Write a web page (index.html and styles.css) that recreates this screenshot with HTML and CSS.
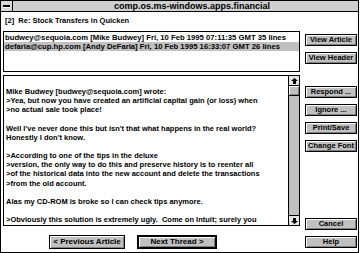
FILE: index.html
```html
<!DOCTYPE html>
<html lang="en">
<head>
  <meta charset="UTF-8">
  <title>comp.os.ms-windows.apps.financial</title>
  <link rel="stylesheet" href="styles.css">
</head>
<body>
  <div class="window">
    <div class="titlebar">
      <div class="sysmenu"><span class="dash"></span></div>
      <div class="title">comp.os.ms-windows.apps.financial</div>
    </div>
    <div class="body">
      <div class="subject">[2]&nbsp; Re: Stock Transfers in Quicken</div>
      <div class="listbox">
        <div class="item">budwey@sequoia.com [Mike Budwey] Fri, 10 Feb 1995 07:11:35 GMT 35 lines</div>
        <div class="item selected">defaria@cup.hp.com [Andy DeFaria] Fri, 10 Feb 1995 16:33:07 GMT 26 lines</div>
      </div>
      <div class="side side-top">
        <button class="btn">View Article</button>
        <button class="btn">View Header</button>
      </div>
      <div class="message">
        <div class="text">Mike Budwey [budwey@sequoia.com] wrote:
&gt;Yea, but now you have created an artificial capital gain (or loss) when
&gt;no actual sale took place!

Well I've never done this but isn't that what happens in the real world?
Honestly I don't know.

&gt;According to one of the tips in the deluxe
&gt;version, the only way to do this and preserve history is to reenter all
&gt;of the historical data into the new account and delete the transactions
&gt;from the old account.

Alas my CD-ROM is broke so I can check tips anymore.

&gt;Obviously this solution is extremely ugly.  Come on Intuit; surely you</div>
        <div class="scrollbar">
          <div class="arrow">
            <svg width="7" height="6" viewBox="0 0 7 6"><path d="M3.5 0 L7 3 H5 V6 H2 V3 H0 Z" fill="#000"/></svg>
          </div>
          <div class="thumb"></div>
          <div class="trough"></div>
          <div class="arrow">
            <svg width="7" height="6" viewBox="0 0 7 6"><path d="M3.5 6 L7 3 H5 V0 H2 V3 H0 Z" fill="#000"/></svg>
          </div>
        </div>
      </div>
      <div class="side side-lower">
        <div class="side-group">
          <button class="btn">Respond ...</button>
          <button class="btn">Ignore ...</button>
          <button class="btn">Print/Save</button>
          <button class="btn">Change Font</button>
        </div>
        <div class="side-group bottom">
          <button class="btn">Cancel</button>
          <button class="btn">Help</button>
        </div>
      </div>
      <div class="nav">
        <button class="btn nav-btn">&lt; Previous Article</button>
        <button class="btn nav-btn default">Next Thread &gt;</button>
      </div>
    </div>
  </div>
</body>
</html>
```

FILE: styles.css
```css
body {
  margin: 0;
  padding: 0;
  background: #fff;
  font-family: 'Liberation Sans', Arial, sans-serif;
  font-weight: bold;
  font-size: 7.5px;
  color: #000;
}
.window {
  width: 359px;
  height: 253px;
  box-sizing: border-box;
  border: 1px solid #000;
  background: #fff;
  display: flex;
  flex-direction: column;
  overflow: hidden;
}
.titlebar {
  display: flex;
  height: 10px;
  border-bottom: 1px solid #000;
  background: #cfcfcf;
}
.sysmenu {
  width: 11px;
  border-right: 1px solid #000;
  background: #d8d8d8;
  display: flex;
  align-items: center;
  justify-content: center;
}
.dash {
  width: 7px;
  height: 2px;
  background: #000;
  box-shadow: 0 1px 0 #fff;
}
.title {
  flex: 1;
  text-align: center;
  padding-left: 13px;
  font-size: 9px;
  line-height: 10px;
}
.body {
  flex: 1;
  min-height: 0;
  display: grid;
  grid-template-columns: 297px 52px;
  grid-template-rows: 16px 41px 151px 1fr;
  column-gap: 5px;
  row-gap: 3px;
  padding: 0 1px 0 2px;
}
.subject {
  grid-column: 1 / 3;
  grid-row: 1;
  padding: 4px 0 0 2px;
  line-height: 10px;
}
.listbox {
  grid-column: 1;
  grid-row: 2;
  border: 1px solid #000;
  padding-top: 1px;
  overflow: hidden;
}
.item {
  line-height: 9px;
  padding-left: 1px;
  white-space: nowrap;
  font-size: 7.7px;
}
.item.selected {
  background: #c0c0c0;
}
.side {
  grid-column: 2;
  display: flex;
  flex-direction: column;
}
.side-top {
  grid-row: 2;
  padding-top: 3px;
  gap: 6px;
}
.side-lower {
  grid-row: 3 / 5;
  justify-content: space-between;
  padding: 11px 0 4px 0;
}
.side-group {
  display: flex;
  flex-direction: column;
  gap: 6px;
}
.btn {
  display: block;
  height: 12px;
  width: 52px;
  padding: 0;
  margin: 0;
  background: #c0c0c0;
  border: 1px solid #000;
  box-shadow: inset 1px 1px 0 #fff, inset -1px -1px 0 #808080;
  font-family: 'Liberation Sans', Arial, sans-serif;
  font-weight: bold;
  font-size: 7.5px;
  line-height: 10px;
  color: #000;
  text-align: center;
}
.message {
  grid-column: 1;
  grid-row: 3;
  display: flex;
  border: 1px solid #000;
  overflow: hidden;
}
.text {
  flex: 1;
  white-space: pre;
  overflow: hidden;
  padding: 11px 0 0 2px;
  line-height: 9.15px;
}
.scrollbar {
  width: 10px;
  border-left: 1px solid #000;
  display: flex;
  flex-direction: column;
  background: #c0c0c0;
}
.arrow {
  height: 9px;
  background: #e4e4e4;
  border-bottom: 1px solid #000;
  display: flex;
  align-items: center;
  justify-content: center;
}
.arrow:last-child {
  border-bottom: none;
  border-top: 1px solid #000;
}
.thumb {
  height: 9px;
  background: #c0c0c0;
  border-bottom: 1px solid #000;
  box-shadow: inset 1px 1px 0 #fff, inset -1px -1px 0 #808080;
}
.trough {
  flex: 1;
}
.nav {
  grid-column: 1;
  grid-row: 4;
  display: flex;
  gap: 12px;
  padding: 6px 0 0 46px;
}
.nav-btn {
  width: 76px;
  height: 14px;
  line-height: 12px;
  font-size: 8px;
}
.nav-btn.default {
  width: 80px;
  border: 2px solid #000;
  line-height: 10px;
}
```
